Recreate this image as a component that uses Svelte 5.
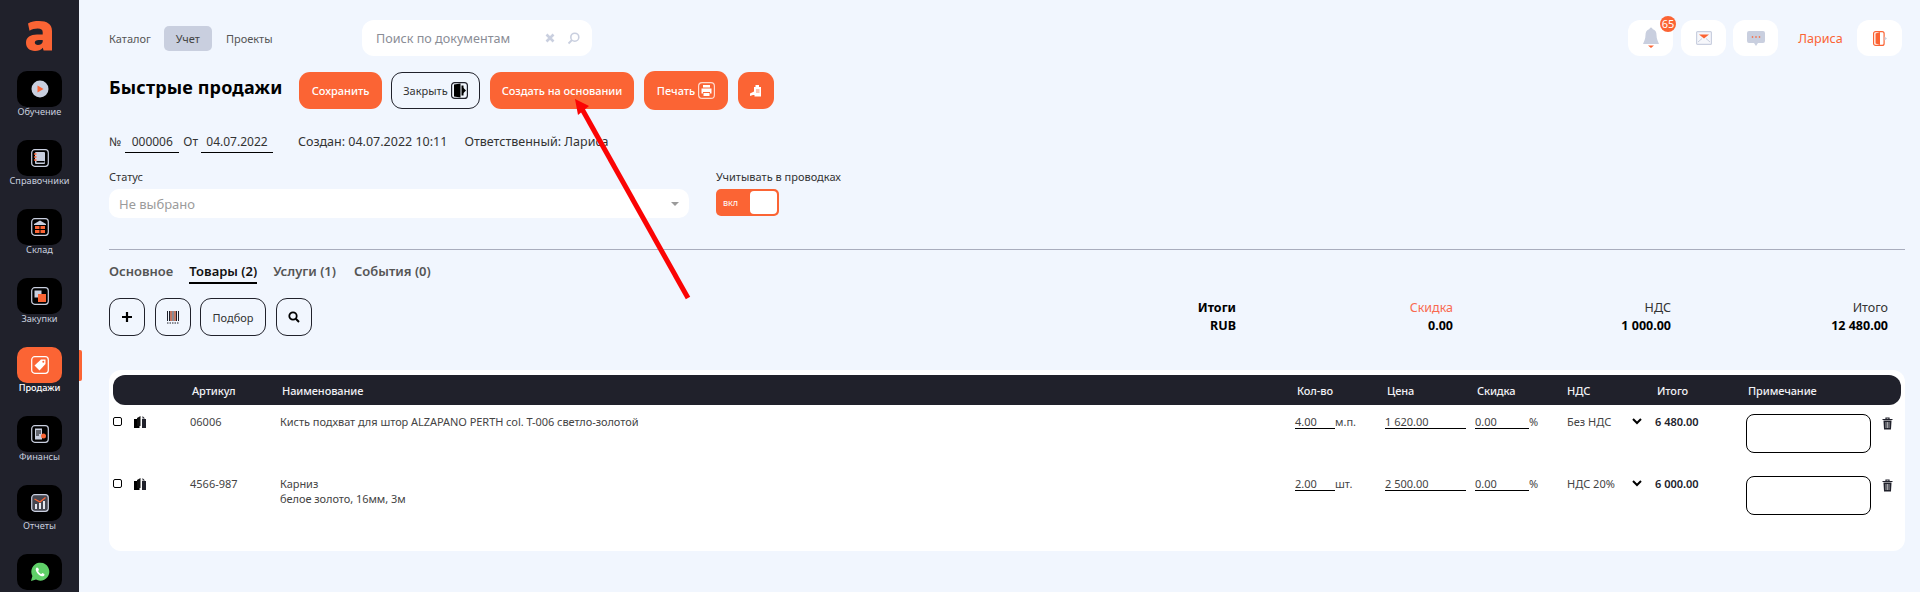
<script lang="ts">
    const navItems = [
        { id: 'learn', label: 'Обучение' },
        { id: 'refs', label: 'Справочники' },
        { id: 'stock', label: 'Склад' },
        { id: 'buy', label: 'Закупки' },
        { id: 'sales', label: 'Продажи', active: true },
        { id: 'finance', label: 'Финансы' },
        { id: 'reports', label: 'Отчеты' },
        { id: 'whatsapp', label: '' }
    ];

    const rows = [
        { sku: '06006', name: 'Кисть подхват для штор ALZAPANO PERTH col. T-006 светло-золотой', sub: '', qty: '4.00', unit: 'м.п.', price: '1 620.00', vat: 'Без НДС', total: '6 480.00' },
        { sku: '4566-987', name: 'Карниз', sub: 'белое золото, 16мм, 3м', qty: '2.00', unit: 'шт.', price: '2 500.00', vat: 'НДС 20%', total: '6 000.00' }
    ];

    const totals = [
        { head: 'Итоги', value: 'RUB', width: 1127, strong: true },
        { head: 'Скидка', value: '0.00', width: 217, accent: true },
        { head: 'НДС', value: '1 000.00', width: 218 },
        { head: 'Итого', value: '12 480.00', width: 217 }
    ];
</script>

<div class="page">
    <aside class="sidebar">
        <svg class="logo" viewBox="0 0 27 30" width="27" height="30">
            <path fill="#fb6434" fill-rule="evenodd" d="M2 2.500C5 .6 9 0 13 0c8 0 13 3 13 10v19.500H17.600l-.8-2.700C15 29 12.300 30 9 30 3.500 30 0 26.800 0 21.800 0 16.300 4.500 13.600 11 13.600h5.700v-2.400c0-2.600-1.500-3.800-5-3.800-3 0-6 .8-8.200 2.300zM16.700 19h-4c-2.500 0-3.900.9-3.900 2.600 0 1.600 1.200 2.500 3.200 2.500 2.300 0 4-1 4.700-3z" />
        </svg>
        {#each navItems as item}
            <div class="nav-item" class:active={item.active}>
                <div class="nav-icon">
                    {#if item.id === 'learn'}
                        <svg viewBox="0 0 18 18" width="18" height="18"><circle cx="9" cy="9" r="8.500" fill="#c9cfdf" /><path d="M6.500 5.500 12.500 9l-6 3.500z" fill="#fb6434" /></svg>
                    {:else if item.id === 'refs'}
                        <svg viewBox="0 0 18 18" width="18" height="18"><rect x=".7" y=".7" width="16.600" height="16.600" rx="3" fill="none" stroke="#c9cfdf" stroke-width="1.200" /><rect x="4" y="3" width="10" height="12" rx="1" fill="#c9cfdf" /><rect x="5.500" y="12" width="8" height="1.500" fill="#000" /><path d="M3 5h2.500M3 8h2.500M3 11h2.500" stroke="#fb6434" stroke-width="1.300" /></svg>
                    {:else if item.id === 'stock'}
                        <svg viewBox="0 0 18 18" width="18" height="18"><rect x=".7" y=".7" width="16.600" height="16.600" rx="3" fill="none" stroke="#c9cfdf" stroke-width="1.200" /><path d="M3 6 9 2.500 15 6v1H3z" fill="#c9cfdf" /><rect x="4" y="8" width="10" height="7" fill="#fb6434" /><path d="M9 8v7M4 11.500h10" stroke="#000" stroke-width="1" /></svg>
                    {:else if item.id === 'buy'}
                        <svg viewBox="0 0 18 18" width="18" height="18"><rect x=".7" y=".7" width="16.600" height="16.600" rx="3" fill="none" stroke="#c9cfdf" stroke-width="1.200" /><rect x="3.500" y="3.500" width="7" height="7" fill="#c9cfdf" /><rect x="7" y="7" width="8" height="8" fill="#fb6434" /></svg>
                    {:else if item.id === 'sales'}
                        <svg viewBox="0 0 18 18" width="18" height="18"><rect x=".7" y=".7" width="16.600" height="16.600" rx="3" fill="none" stroke="#fff" stroke-width="1.200" /><path d="M10 3.500h4.500V8l-6 6.500L3.500 9.500z" fill="#fff" /><circle cx="12.300" cy="5.700" r="1" fill="#fb6434" /></svg>
                    {:else if item.id === 'finance'}
                        <svg viewBox="0 0 18 18" width="18" height="18"><rect x=".7" y=".7" width="16.600" height="16.600" rx="3" fill="none" stroke="#c9cfdf" stroke-width="1.200" /><path d="M4 3.500h7v11H4z" fill="#c9cfdf" /><path d="M5 6h5M5 8h5M5 10h3" stroke="#000" stroke-width="1" /><circle cx="12.500" cy="11" r="2.500" fill="#fb6434" /></svg>
                    {:else if item.id === 'reports'}
                        <svg viewBox="0 0 18 18" width="18" height="18"><rect x=".7" y=".7" width="16.600" height="16.600" rx="3" fill="#444650" stroke="#c9cfdf" stroke-width="1.200" /><path d="M4 10h2v5H4zM8 9h2v6H8zM12 7h2v8h-2z" fill="#e4e7ef" /><path d="M3.500 5 9 8l5.500-4.500" fill="none" stroke="#fb6434" stroke-width="1.400" /></svg>
                    {:else}
                        <svg viewBox="0 0 20 20" width="20" height="20"><path d="M1 19l1.400-5A9 9 0 1 1 6 17.600z" fill="#5fd068" /><path d="M7 5.500c-.8.300-1.400 1.300-1.200 2.500.4 2.500 3.500 5.800 6.200 6.300 1.200.2 2.200-.5 2.500-1.300l-.2-1-1.900-.9-1 1c-1.300-.5-2.700-1.800-3.300-3.200l.9-1-.8-2z" fill="#fff" /></svg>
                    {/if}
                </div>
                {#if item.label}<span>{item.label}</span>{/if}
            </div>
        {/each}
    </aside>

    <main class="content">
        <header class="topbar">
            <nav class="menu">
                <span>Каталог</span>
                <span class="current">Учет</span>
                <span>Проекты</span>
            </nav>
            <div class="search">
                <span>Поиск по документам</span>
                <svg viewBox="0 0 10 10" width="10" height="10"><path d="M1.500 1.500l7 7M8.500 1.500l-7 7" stroke="#c9cfdf" stroke-width="2.600" /></svg>
                <svg viewBox="0 0 13 13" width="13" height="13"><circle cx="7.800" cy="5.200" r="4" fill="none" stroke="#c9cfdf" stroke-width="1.600" /><path d="M5 8 1.500 11.500" stroke="#c9cfdf" stroke-width="1.800" /></svg>
            </div>
            <div class="top-actions">
                <div class="tile bell">
                    <svg viewBox="0 0 18 24" width="18" height="24"><path d="M9 1.500a1.500 1.500 0 0 1 1.500 1.500c3 .8 4 3.200 4 6 0 4 1.500 6 2.500 9H1c1-3 2.500-5 2.500-9 0-2.800 1-5.200 4-6A1.500 1.500 0 0 1 9 1.500z" fill="#c9cfdf" /><path d="M6 19.500h6L9 22z" fill="#fb6434" /></svg>
                    <b class="badge">65</b>
                </div>
                <div class="tile">
                    <svg viewBox="0 0 16 14" width="16" height="14"><rect x=".6" y=".6" width="14.800" height="12.800" rx="1" fill="#f6f7fb" stroke="#c9cfdf" stroke-width="1.200" /><path d="M3 3.500h10L8 7.500z" fill="#fb6434" /><path d="M2 11l4-3.500M14 11l-4-3.500" stroke="#c9cfdf" /></svg>
                </div>
                <div class="tile">
                    <svg viewBox="0 0 18 15" width="18" height="15"><path d="M2 0h14a2 2 0 0 1 2 2v8a2 2 0 0 1-2 2h-5l-2 3-2-3H2a2 2 0 0 1-2-2V2a2 2 0 0 1 2-2z" fill="#c9cfdf" /><path d="M4.800 6h1.400M8.300 6h1.400M11.800 6h1.400" stroke="#fb6434" stroke-width="1.600" /></svg>
                </div>
                <span class="user">Лариса</span>
                <div class="tile">
                    <svg viewBox="0 0 14 15" width="14" height="15"><rect x=".6" y=".6" width="10.500" height="13.800" rx="2" fill="none" stroke="#fb6434" stroke-width="1.200" /><path d="M2.500 2.500 7 1v13l-4.500-1.500z" fill="#fb6434" /><path d="M11.500 5.500 14 7.500l-2.500 2z" fill="#c9cfdf" /></svg>
                </div>
            </div>
        </header>

        <div class="title-row">
            <h1>Быстрые продажи</h1>
            <button class="btn primary save">Сохранить</button>
            <button class="btn outline close">
                Закрыть
                <svg viewBox="0 0 17 17" width="17" height="17"><rect x=".6" y=".6" width="15.800" height="15.800" rx="3" fill="none" stroke="#20212b" stroke-width="1.200" /><path d="M3 2.500 9.500 1.500v14L3 14.500z" fill="#000" /><path d="M10.500 3.500h2v10h-2z" fill="#000" /><path d="M12 5.500l3 3-3 3z" fill="#000" /></svg>
            </button>
            <button class="btn primary create">Создать на основании</button>
            <button class="btn primary print">
                Печать
                <svg viewBox="0 0 17 17" width="17" height="17"><rect x=".6" y=".6" width="15.800" height="15.800" rx="3.500" fill="none" stroke="#ffd9cc" stroke-width="1.200" /><path d="M5 3h7v2.500H5zM3.500 6.500h10v5H12V10H5v1.500H3.500zM5.500 11h6v3h-6z" fill="#fff" /></svg>
            </button>
            <button class="btn primary square">
                <svg viewBox="0 0 12 12" width="12" height="12"><path d="M4 2h1.500V0H9v2h2v9.500H4.500V10H3L0 11V8.500L4 6.500z" fill="#fff" /><path d="M6 5h3.500M6 7h3.500" stroke="#fb6434" stroke-width=".8" /></svg>
            </button>
        </div>

        <div class="doc-line">
            <span>№</span>
            <span class="field num">000006</span>
            <span>От</span>
            <span class="field date">04.07.2022</span>
            <span class="created">Создан: 04.07.2022 10:11</span>
            <span class="owner">Ответственный: Лариса</span>
        </div>

        <div class="status-row">
            <div class="status">
                <label for="status-select">Статус</label>
                <div id="status-select" class="select">
                    <span>Не выбрано</span>
                    <i class="caret"></i>
                </div>
            </div>
            <div class="posting">
                <span class="posting-label">Учитывать в проводках</span>
                <div class="toggle">
                    <span>вкл</span>
                    <i></i>
                </div>
            </div>
        </div>

        <hr />

        <div class="tabs">
            <span>Основное</span>
            <span class="selected">Товары (2)</span>
            <span>Услуги (1)</span>
            <span>События (0)</span>
        </div>

        <div class="tools-row">
            <div class="tools">
                <button class="tool">
                    <svg viewBox="0 0 12 12" width="12" height="12"><path d="M6 1v10M1 6h10" stroke="#000" stroke-width="2.200" /></svg>
                </button>
                <button class="tool">
                    <svg viewBox="0 0 12 13" width="12" height="13"><path d="M.5 0v10M2.500 0v10M4 0v10M6 0v10M8 0v10M9.500 0v10M11.500 0v10" stroke-width="1" stroke="#20212b" /><path d="M4 0v10M8 0v10" stroke="#fb6434" /><path d="M0 12h12" stroke="#20212b" stroke-dasharray="1.500 1" /></svg>
                </button>
                <button class="tool pick">Подбор</button>
                <button class="tool find">
                    <svg viewBox="0 0 12 12" width="12" height="12"><circle cx="5" cy="5" r="3.700" fill="none" stroke="#000" stroke-width="1.800" /><path d="M7.800 7.800 11 11" stroke="#000" stroke-width="2" /></svg>
                </button>
            </div>
            <div class="totals">
                {#each totals as t}
                    <div class="total-col" style="width: {t.width}px">
                        <span class:accent={t.accent} class:head-strong={t.strong}>{t.head}</span>
                        <b>{t.value}</b>
                    </div>
                {/each}
            </div>
        </div>

        <section class="table">
            <div class="grid head">
                <span></span>
                <span></span>
                <span>Артикул</span>
                <span>Наименование</span>
                <span>Кол-во</span>
                <span>Цена</span>
                <span>Скидка</span>
                <span class="vat-head">НДС</span>
                <span></span>
                <span>Итого</span>
                <span>Примечание</span>
                <span></span>
            </div>
            {#each rows as row}
                <div class="grid row">
                    <i class="check"></i>
                    <svg class="copy" viewBox="0 0 12 12" width="12" height="12"><path d="M0 3h5.500v9H0z" fill="#000" /><path d="M3 2 6.500 0v10H3z" fill="#111" /><path d="M8 3h4v9H8z" fill="#20212b" /><path d="M8.500 0 11 2.500H8.500z" fill="#20212b" /></svg>
                    <span>{row.sku}</span>
                    <div class="name">
                        <div>{row.name}</div>
                        {#if row.sub}<div>{row.sub}</div>{/if}
                    </div>
                    <div class="qty">
                        <span class="line short">{row.qty}</span>
                        <span class="unit">{row.unit}</span>
                    </div>
                    <span class="line price">{row.price}</span>
                    <div class="disc">
                        <span class="line short">0.00</span>
                        <span class="unit">%</span>
                    </div>
                    <span>{row.vat}</span>
                    <svg class="chev" viewBox="0 0 10 7" width="10" height="7"><path d="M1 1l4 4 4-4" fill="none" stroke="#000" stroke-width="2" /></svg>
                    <b>{row.total}</b>
                    <i class="note"></i>
                    <svg class="trash" viewBox="0 0 11 13" width="11" height="13"><path d="M.5 2.500h10M4 2.500V1h3v1.500" fill="none" stroke="#20212b" stroke-width="1.200" /><path d="M1.500 3.500h8l-.5 9H2z" fill="#20212b" /><path d="M4 5v6M5.500 5v6M7 5v6" stroke="#fff" stroke-width=".6" /></svg>
                </div>
            {/each}
        </section>
    </main>

    <aside class="rail-mark"></aside>

    <svg class="arrow" width="140" height="210" viewBox="0 0 140 210">
        <path d="M122 203 16 14" stroke="#fb0404" stroke-width="5" fill="none" />
        <path d="M9 4 23 11 12 20z" fill="#fb0404" />
    </svg>
</div>

<style>
    :global(body) {
        margin: 0;
        background: #f1f6fe;
    }

    .page {
        position: relative;
        display: flex;
        height: 592px;
        overflow: hidden;
        font-family: 'Noto Sans', 'Open Sans', sans-serif;
        font-size: 11px;
        color: #20212b;
    }

    .sidebar {
        flex: 0 0 79px;
        display: flex;
        flex-direction: column;
        align-items: center;
        background: #20212b;
    }

    .logo {
        flex: none;
        margin: 21px 0 20px;
    }

    .nav-item {
        flex: none;
        height: 69px;
        width: 100%;
        display: flex;
        flex-direction: column;
        align-items: center;
        color: #c9cfdf;
        font-size: 9.200px;
        line-height: 14px;
    }

    .nav-icon {
        width: 45px;
        height: 36px;
        flex: none;
        margin-bottom: -2px;
        background: #000;
        border-radius: 10px;
        display: flex;
        align-items: center;
        justify-content: center;
    }

    .nav-item span {
        position: relative;
    }

    .nav-item.active {
        color: #fff;
        font-weight: 500;
    }

    .nav-item.active .nav-icon {
        background: #fb6434;
    }

    .rail-mark {
        position: absolute;
        left: 79px;
        top: 350px;
        width: 3px;
        height: 31px;
        background: #fb6434;
        border-radius: 0 2px 2px 0;
    }

    .content {
        flex: 1;
        min-width: 0;
        padding: 20px 15px 0 30px;
    }

    .topbar {
        display: flex;
        align-items: center;
        height: 36px;
    }

    .menu {
        width: 253px;
        display: flex;
        align-items: center;
        color: #555;
    }

    .menu span {
        padding: 0 12px;
        height: 25px;
        line-height: 25px;
        border-radius: 5px;
    }

    .menu span:first-child {
        padding-left: 0;
        padding-right: 13px;
    }

    .menu span:last-child {
        padding-left: 14px;
    }

    .menu .current {
        background: #c9cfdf;
        color: #444;
    }

    .search {
        width: 230px;
        height: 36px;
        box-sizing: border-box;
        padding: 0 12px 0 14px;
        display: flex;
        align-items: center;
        gap: 12px;
        background: #fff;
        border-radius: 12px;
        font-size: 12.600px;
        color: #8a8d96;
    }

    .search span {
        flex: 1;
    }

    .top-actions {
        margin-left: auto;
        margin-right: 3px;
        display: flex;
        align-items: center;
        gap: 7px;
    }

    .tile {
        position: relative;
        width: 45px;
        height: 36px;
        background: #fff;
        border-radius: 12px;
        display: flex;
        align-items: center;
        justify-content: center;
    }

    .tile.bell {
        margin-right: 1px;
    }

    .badge {
        position: absolute;
        top: -4px;
        right: -3px;
        width: 16px;
        height: 16px;
        border-radius: 50%;
        background: #fb6434;
        color: #fff;
        font-size: 11px;
        font-weight: 400;
        line-height: 16px;
        text-align: center;
    }

    .user {
        width: 45px;
        margin: 0 7px 0 13px;
        font-size: 12.600px;
        color: #fb6434;
        text-align: center;
        white-space: nowrap;
    }

    .title-row {
        display: flex;
        align-items: center;
        gap: 9px;
        margin-top: 15px;
        height: 39px;
    }

    h1 {
        width: 181px;
        margin: -7px 0 0;
        font-size: 18px;
        font-weight: 700;
        letter-spacing: 0.15px;
        color: #000;
        white-space: nowrap;
    }

    .btn {
        height: 37px;
        padding: 0;
        border: none;
        border-radius: 11px;
        font: 500 11px 'Noto Sans', sans-serif;
        display: flex;
        align-items: center;
        justify-content: center;
        gap: 3px;
    }

    .primary {
        background: #fb6434;
        color: #fff;
    }

    .outline {
        background: transparent;
        border: 1px solid #20212b;
        color: #333;
        font-weight: 400;
    }

    .save { width: 83px; }
    .close { width: 89px; }
    .create { width: 144px; margin-left: 1px; letter-spacing: -0.05px; }
    .print { width: 84px; height: 39px; margin-left: 1px; }
    .square { width: 36px; margin-left: 1px; }

    .doc-line {
        display: flex;
        align-items: flex-start;
        margin-top: 21px;
        height: 23px;
        font-size: 12px;
        line-height: 22px;
        color: #333;
    }

    .field {
        height: 21px;
        border-bottom: 1px solid #000;
        text-align: center;
    }

    .field.num { width: 54px; margin: 0 4px 0 4px; }
    .field.date { width: 72px; margin-left: 3px; }
    .created { margin-left: 25px; font-size: 12.500px; }
    .owner { margin-left: 17px; font-size: 12.500px; }

    .status-row {
        display: flex;
        margin-top: 15px;
        height: 80px;
    }

    .status {
        width: 580px;
        margin-right: 27px;
    }

    .status label,
    .posting-label {
        display: block;
        height: 20px;
        font-size: 11px;
        line-height: 16px;
        color: #333;
    }

    .select {
        height: 29px;
        box-sizing: border-box;
        padding: 0 10px;
        display: flex;
        align-items: center;
        justify-content: space-between;
        background: #fff;
        border-radius: 10px;
        font-size: 13px;
        color: #9b9b9b;
    }

    .caret {
        width: 0;
        height: 0;
        border: 4px solid transparent;
        border-top: 4px solid #9b9b9b;
        margin-top: 4px;
    }

    .toggle {
        width: 63px;
        height: 27px;
        box-sizing: border-box;
        padding: 2px 2px 2px 7px;
        display: flex;
        align-items: center;
        justify-content: space-between;
        background: #fb6434;
        border-radius: 5px;
        color: #fff;
        font-size: 9px;
    }

    .toggle i {
        width: 27px;
        height: 23px;
        background: #fff;
        border-radius: 4px;
    }

    hr {
        margin: 0;
        border: none;
        border-top: 1px solid #a9adbd;
    }

    .tabs {
        display: flex;
        gap: 16px;
        margin-top: 12px;
        font-size: 13px;
        font-weight: 600;
        color: #555;
    }

    .tabs span {
        height: 20px;
        line-height: 18px;
    }

    .tabs span:last-child {
        margin-left: 2px;
    }

    .tabs .selected {
        color: #111;
        border-bottom: 2px solid #000;
    }

    .tools-row {
        display: flex;
        margin-top: 14px;
        height: 72px;
    }

    .tools {
        display: flex;
        gap: 10px;
        width: 0;
    }

    .tool {
        flex: none;
        width: 36px;
        height: 38px;
        padding: 0;
        background: transparent;
        border: 1px solid #20212b;
        border-radius: 11px;
        display: flex;
        align-items: center;
        justify-content: center;
        font: 11px 'Noto Sans', sans-serif;
        color: #333;
    }

    .tool.pick {
        width: 66px;
        margin-left: -1px;
    }

    .totals {
        display: flex;
    }

    .total-col {
        display: flex;
        flex-direction: column;
        align-items: flex-end;
        margin-top: 1px;
        font-size: 12.500px;
        line-height: 18px;
        color: #333;
    }

    .total-col b {
        color: #000;
        font-weight: 700;
    }

    .accent {
        color: #f96a50;
    }

    .head-strong {
        color: #000;
        font-weight: 700;
    }

    .table {
        width: 1796px;
        height: 181px;
        box-sizing: border-box;
        padding: 5px 4px;
        background: #fff;
        border-radius: 12px;
    }

    .grid {
        display: grid;
        grid-template-columns: 21px 56px 90px 1015px 90px 90px 92px 65px 23px 91px 136px 1fr;
        align-items: start;
    }

    .head {
        height: 30px;
        margin-bottom: 9px;
        align-items: center;
        background: #20212b;
        border-radius: 12px;
        color: #f1f1f5;
        font-weight: 500;
        letter-spacing: -0.1px;
    }

    .head span {
        padding-left: 2px;
    }

    .head .vat-head {
        padding-left: 0;
    }

    .row {
        height: 62px;
        color: #444;
        line-height: 15px;
    }

    .check {
        width: 7px;
        height: 7px;
        margin-top: 3px;
        border: 1px solid #000;
        border-radius: 2px;
    }

    .copy {
        margin-top: 2px;
    }

    .name {
        white-space: nowrap;
        letter-spacing: -0.05px;
    }

    .line {
        display: block;
        height: 14px;
        border-bottom: 1px solid #000;
    }

    .price {
        width: 81px;
    }

    .qty,
    .disc {
        display: flex;
    }

    .qty .short {
        width: 40px;
    }

    .disc .short {
        width: 54px;
    }

    .unit {
        display: block;
    }

    .chev {
        margin-top: 4px;
    }

    .row b {
        color: #20212b;
        font-weight: 600;
    }

    .note {
        width: 125px;
        height: 39px;
        box-sizing: border-box;
        border: 1px solid #000;
        border-radius: 8px;
    }

    .trash {
        margin-top: 3px;
    }

    .arrow {
        position: absolute;
        left: 566px;
        top: 95px;
    }
</style>
